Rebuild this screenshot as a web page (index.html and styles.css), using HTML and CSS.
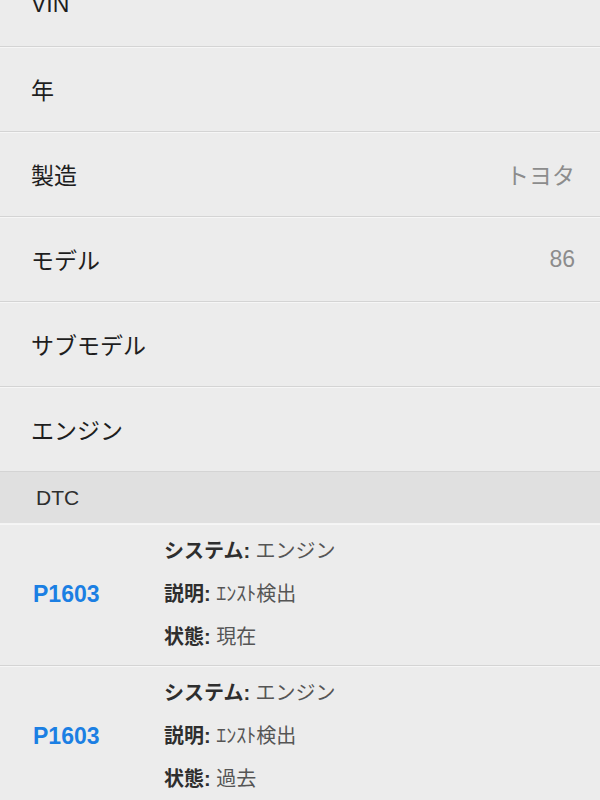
FILE: index.html
```html
<!DOCTYPE html>
<html lang="ja">
<head>
<meta charset="utf-8">
<link rel="stylesheet" href="styles.css">
</head>
<body>
<div class="list">
  <div class="row first"><span class="label">VIN</span><span class="value"></span></div>
  <div class="row"><span class="label">年</span><span class="value"></span></div>
  <div class="row"><span class="label">製造</span><span class="value">トヨタ</span></div>
  <div class="row"><span class="label">モデル</span><span class="value">86</span></div>
  <div class="row"><span class="label">サブモデル</span><span class="value"></span></div>
  <div class="row"><span class="label">エンジン</span><span class="value"></span></div>
  <div class="section">DTC</div>
  <div class="dtc">
    <div class="code">P1603</div>
    <div class="details">
      <div class="line"><b>システム:</b> エンジン</div>
      <div class="line"><b>説明:</b> <span class="narrow">ｴﾝｽﾄ検出</span></div>
      <div class="line"><b>状態:</b> 現在</div>
    </div>
  </div>
  <div class="dtc">
    <div class="code">P1603</div>
    <div class="details">
      <div class="line"><b>システム:</b> エンジン</div>
      <div class="line"><b>説明:</b> <span class="narrow">ｴﾝｽﾄ検出</span></div>
      <div class="line"><b>状態:</b> 過去</div>
    </div>
  </div>
</div>
</body>
</html>
```
FILE: styles.css
```css
html, body {
  margin: 0;
  padding: 0;
  background: #ececec;
  overflow: hidden;
}
body {
  font-family: "Liberation Sans", "Noto Sans CJK JP", sans-serif;
  color: #1e1e1e;
}
.list {
  margin-top: -38px;
}
.row {
  height: 84px;
  border-bottom: 1px solid #d4d4d4;
  box-shadow: inset 0 1px 0 #f6f6f6;
  display: flex;
  align-items: center;
  justify-content: space-between;
  padding: 0 25px 0 31px;
  box-sizing: content-box;
}
.row.first {
  box-shadow: none;
}
.label {
  font-size: 23px;
}
.value {
  font-size: 23px;
  color: #8c8c8c;
}
.section {
  height: 51px;
  background: #e0e0e0;
  display: flex;
  align-items: center;
  padding-left: 36px;
  font-size: 21px;
  color: #2e2e2e;
  border-bottom: 1px solid #f4f4f4;
}
.dtc {
  display: flex;
  align-items: center;
  height: 141px;
  border-bottom: 1px solid #d4d4d4;
  box-shadow: inset 0 1px 0 #f6f6f6;
}
.code {
  width: 164px;
  flex: none;
  padding-left: 33px;
  box-sizing: border-box;
  font-size: 23px;
  font-weight: bold;
  color: #1b7fe3;
}
.details {
  display: flex;
  flex-direction: column;
}
.line {
  height: 43px;
  line-height: 43px;
  font-size: 20px;
  color: #555;
}
.line b {
  color: #2e2e2e;
  font-weight: bold;
}
.narrow {
  color: #555;
}
```
